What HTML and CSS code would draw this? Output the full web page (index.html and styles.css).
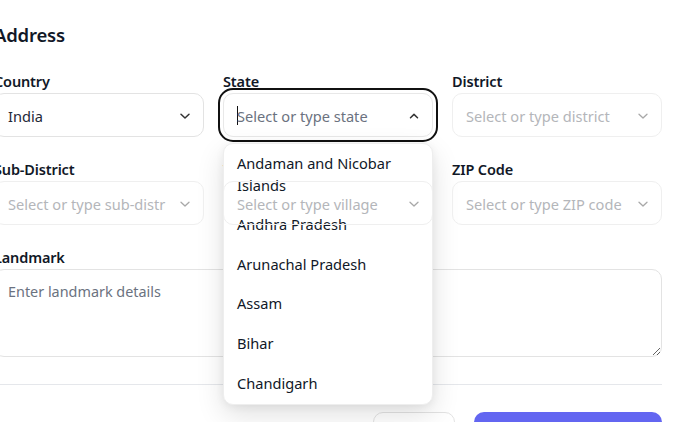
FILE: index.html
```html
<!DOCTYPE html>
<html lang="en">
<head>
<meta charset="utf-8">
<title>Address</title>
<link rel="stylesheet" href="styles.css">
</head>
<body>
<div class="page">
  <h2 class="title">Address</h2>
  <div class="grid">
    <div class="field">
      <label class="label">Country</label>
      <div class="select">
        <span class="value">India</span>
        <svg class="chev" viewBox="0 0 12 12"><path d="M2 4.2 L6 8 L10 4.2"/></svg>
      </div>
    </div>
    <div class="field state">
      <label class="label">State</label>
      <div class="select focused">
        <span class="text"><span class="caret"></span><span class="ph">Select or type state</span></span>
        <svg class="chev up" viewBox="0 0 12 12"><path d="M2.5 7.8 L6 4.4 L9.5 7.8"/></svg>
      </div>
      <ul class="menu">
        <li>Andaman and Nicobar Islands</li>
        <li>Andhra Pradesh</li>
        <li>Arunachal Pradesh</li>
        <li>Assam</li>
        <li>Bihar</li>
        <li>Chandigarh</li>
      </ul>
    </div>
    <div class="field">
      <label class="label">District</label>
      <div class="select disabled">
        <span class="text ph-light">Select or type district</span>
        <svg class="chev" viewBox="0 0 12 12"><path d="M2 4.2 L6 8 L10 4.2"/></svg>
      </div>
    </div>
    <div class="field">
      <label class="label">Sub-District</label>
      <div class="select disabled">
        <span class="text ph-light">Select or type sub-district</span>
        <svg class="chev" viewBox="0 0 12 12"><path d="M2 4.2 L6 8 L10 4.2"/></svg>
      </div>
    </div>
    <div class="field">
      <label class="label">Village</label>
      <div class="select disabled">
        <span class="text ph-light">Select or type village</span>
        <svg class="chev" viewBox="0 0 12 12"><path d="M2 4.2 L6 8 L10 4.2"/></svg>
      </div>
    </div>
    <div class="field">
      <label class="label">ZIP Code</label>
      <div class="select disabled">
        <span class="text ph-light">Select or type ZIP code</span>
        <svg class="chev" viewBox="0 0 12 12"><path d="M2 4.2 L6 8 L10 4.2"/></svg>
      </div>
    </div>
    <div class="field wide">
      <label class="label">Landmark</label>
      <textarea class="area" placeholder="Enter landmark details"></textarea>
    </div>
  </div>
  <hr class="divider">
  <div class="actions">
    <button class="btn ghost">Cancel</button>
    <button class="btn primary">Save Address</button>
  </div>
</div>
</body>
</html>
```

FILE: styles.css
```css
* { box-sizing: border-box; }
html, body { margin: 0; padding: 0; background: #fff; }
body {
  font-family: "Noto Sans", "Open Sans", sans-serif;
  color: #111827;
  overflow: hidden;
}
.page {
  margin-left: -6px;
  width: 668px;
  padding-top: 21px;
}
.title {
  margin: 0 0 23px;
  font-size: 18.5px;
  line-height: 28px;
  font-weight: 600;
  letter-spacing: -0.2px;
}
.grid {
  display: grid;
  grid-template-columns: 210px 210px 210px;
  column-gap: 19px;
  row-gap: 23px;
}
.field { display: flex; flex-direction: column; }
.field.state { position: relative; }
.field.wide { grid-column: 1 / -1; }
.label {
  font-size: 14.5px;
  line-height: 20px;
  font-weight: 600;
  margin-top: -1px;
  margin-bottom: 2px;
  letter-spacing: -0.15px;
}
.select {
  position: relative;
  height: 44px;
  border: 1px solid #e3e3e3;
  border-radius: 10px;
  display: flex;
  align-items: center;
  padding: 1px 12px 0 13px;
  font-size: 14.6px;
  background: transparent;
}
.select.disabled { border-color: #efefef; }
.select.focused {
  outline: 2px solid #111;
  outline-offset: 3px;
  border-color: #e8e8e8;
}
.value, .text {
  flex: 1;
  min-width: 0;
  white-space: nowrap;
  overflow: hidden;
  color: #1f2937;
}
.text { display: flex; align-items: center; }
.caret {
  display: inline-block;
  width: 1px;
  height: 19px;
  background: #111;
  margin-right: -1px;
}
.ph { color: #6b7280; }
.ph-light { color: #b4b6ba; display: block; }
.chev {
  width: 12px;
  height: 12px;
  flex: none;
  margin-left: 13px;
  fill: none;
  stroke: #333;
  stroke-width: 1.5;
  stroke-linecap: round;
  stroke-linejoin: round;
}
.disabled .chev { stroke: #a8a8a8; stroke-width: 1.3; }
.menu {
  position: absolute;
  top: 71px;
  left: 0;
  width: 210px;
  margin: 0;
  padding: 0;
  list-style: none;
  background: #fff;
  border: 1px solid #eee;
  border-radius: 10px;
  box-shadow: 0 10px 28px rgba(0, 0, 0, 0.12), 0 2px 8px rgba(0, 0, 0, 0.06);
}
.menu li {
  padding: 7.6px 18px 10px 13px;
  font-size: 14.6px;
  line-height: 22px;
  color: #111827;
}
.area {
  display: block;
  width: 100%;
  height: 88px;
  border: 1px solid #e3e3e3;
  border-radius: 10px;
  padding: 11px 13px 10px;
  font-family: inherit;
  font-size: 14.4px;
  line-height: 22px;
  color: #1f2937;
  resize: vertical;
}
.area::placeholder { color: #6b7280; }
.divider {
  margin: 27px 0 0;
  border: 0;
  border-top: 1px solid #e5e7eb;
  height: 0;
}
.actions {
  display: flex;
  justify-content: flex-end;
  gap: 19px;
  margin-top: 27px;
}
.btn {
  height: 42px;
  border-radius: 10px;
  font-family: inherit;
  font-size: 14px;
  font-weight: 600;
}
.ghost {
  width: 82px;
  border: 1px solid #e3e3e3;
  background: #fff;
  color: #111827;
}
.primary {
  width: 188px;
  border: 0;
  background: #6366f1;
  color: #fff;
}
```
